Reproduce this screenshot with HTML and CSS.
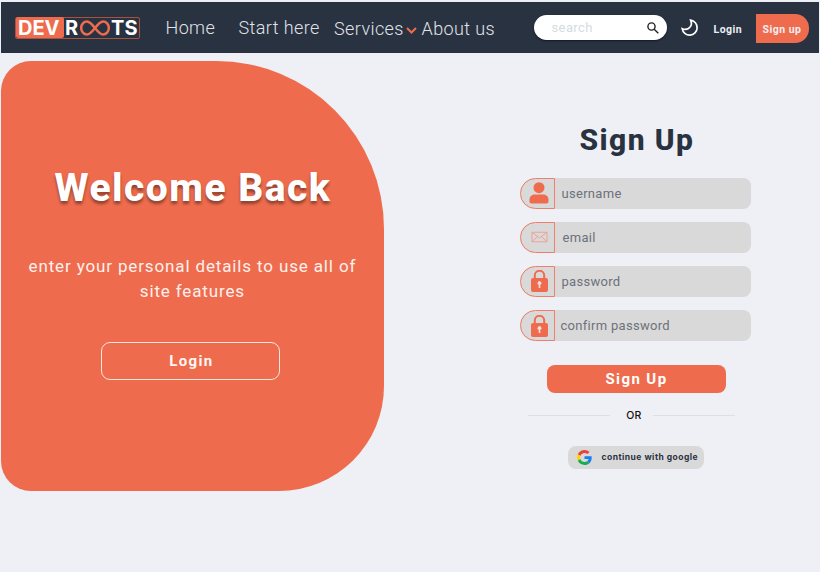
FILE: index.html
```html
<!DOCTYPE html>
<html lang="en">
<head>
<meta charset="utf-8">
<title>DevRoots - Sign Up</title>
<link rel="stylesheet" href="styles.css">
</head>
<body>
<header class="navbar">
  <a class="logo"><span class="logo-dev">DEV</span><span class="logo-r">R</span><svg class="logo-loop" viewBox="0 0 30 16"><path d="M15 8C11.500 3.500 9.500 1.500 7 1.500a5.800 6.500 0 0 0 0 13c2.500 0 4.500-2 8-6.500s5.500-6.500 8-6.500a5.800 6.500 0 0 1 0 13c-2.500 0-4.500-2-8-6.500z"/></svg><span class="logo-ts">TS</span></a>
  <nav class="links">
    <a class="link home">Home</a>
    <a class="link start">Start here</a>
    <a class="link services">Services</a>
    <svg class="chevron" viewBox="0 0 11 7"><path d="M1 1l4.500 4.500L10 1"/></svg>
    <a class="link about">About us</a>
  </nav>
  <div class="search"><span class="search-text">search</span><svg class="search-icon" viewBox="0 0 12 12"><circle cx="4.500" cy="4.500" r="3.600"/><path d="M7.200 7.200L11.300 11.300"/></svg></div>
  <svg class="moon" viewBox="0 0 18 18"><path d="M9.600 1.200A7.500 7.500 0 1 1 1.200 9.700Q4.500 11.200 7.400 9.500Q12 6.800 9.600 1.200z"/></svg>
  <a class="nav-login">Login</a>
  <a class="nav-signup">Sign up</a>
</header>
<main class="content">
  <section class="welcome">
    <h1 class="welcome-title">Welcome Back</h1>
    <p class="welcome-copy">enter your personal details to use all of<br>site features</p>
    <button class="welcome-login">Login</button>
  </section>
  <form class="signup">
    <h2 class="signup-title">Sign Up</h2>
    <div class="field"><span class="field-icon"><svg class="user" viewBox="0 0 20 22"><circle cx="10" cy="5.700" r="5.500"/><path d="M.5 19.500v-2c0-3 2.500-5 5.500-5h8c3 0 5.500 2 5.500 5v2c0 1.300-.8 2-2 2h-15c-1.200 0-2-.7-2-2z"/></svg></span><span class="field-label username">username</span></div>
    <div class="field"><span class="field-icon"><svg class="mail" viewBox="0 0 18 12"><path d="M1 1h16v10H1zM1 1l8 6 8-6M1 11l6-5.500M17 11l-6-5.500"/></svg></span><span class="field-label email">email</span></div>
    <div class="field"><span class="field-icon"><svg class="lock" viewBox="0 0 17 22"><path class="shackle" d="M3.800 9V5.500a4.700 4.700 0 0 1 9.400 0V9"/><rect y="8" width="17" height="14" rx="2"/><path class="keyhole" d="M7.700 14.800a1.900 1.900 0 1 1 1.600 0V18H7.700z"/></svg></span><span class="field-label password">password</span></div>
    <div class="field"><span class="field-icon"><svg class="lock" viewBox="0 0 17 22"><path class="shackle" d="M3.800 9V5.500a4.700 4.700 0 0 1 9.400 0V9"/><rect y="8" width="17" height="14" rx="2"/><path class="keyhole" d="M7.700 14.800a1.900 1.900 0 1 1 1.600 0V18H7.700z"/></svg></span><span class="field-label confirm">confirm password</span></div>
    <button class="submit" type="button">Sign Up</button>
    <div class="divider"><span class="or">OR</span></div>
    <button class="google" type="button"><svg class="google-icon" viewBox="0 0 48 48"><path fill="#EA4335" d="M24 9.500c3.540 0 6.710 1.220 9.210 3.600l6.850-6.850C35.900 2.380 30.470 0 24 0 14.620 0 6.510 5.380 2.560 13.220l7.980 6.190C12.430 13.720 17.740 9.500 24 9.500z"/><path fill="#1a7df0" d="M46.980 24.550c0-1.570-.15-3.090-.38-4.550H24v9.020h12.940c-.58 2.960-2.260 5.480-4.780 7.180l7.730 6c4.510-4.180 7.090-10.360 7.090-17.650z"/><path fill="#FFD500" d="M10.530 28.590c-.48-1.450-.76-2.990-.76-4.590s.27-3.140.76-4.590l-7.980-6.190C.92 16.460 0 20.120 0 24s.92 7.540 2.560 10.780l7.970-6.190z"/><path fill="#16b04a" d="M24 48c6.480 0 11.930-2.130 15.890-5.810l-7.730-6c-2.150 1.450-4.920 2.300-8.160 2.300-6.260 0-11.570-4.220-13.470-9.910l-7.980 6.190C6.510 42.620 14.620 48 24 48z"/></svg><span class="google-text">continue with google</span></button>
  </form>
</main>
</body>
</html>
```
FILE: styles.css
```css
* { box-sizing: border-box; }

body {
  margin: 0;
  padding: 2.4px 1.500px 0 .8px;
  height: 572px;
  overflow: hidden;
  background: #eff0f5;
  font-family: Roboto, "Liberation Sans", sans-serif;
  white-space: nowrap;
}

svg { display: block; flex: none; fill: none; }
button { border: 0; padding: 0; font-family: inherit; }

.navbar {
  display: flex;
  align-items: center;
  height: 51px;
  padding-left: 14.200px;
  background: #293241;
}

.logo {
  display: flex;
  align-items: center;
  width: 125.500px;
  height: 22px;
  border: 1px solid #a9523f;
  border-radius: 2px;
  color: #fff;
  font: 700 20px/23px Inter, sans-serif;
}
.logo-dev { width: 48px; height: 21px; padding-left: 2px; border-radius: 2px; background: #ee6c4d; }
.logo-r { width: 16px; padding: 2px 0 0 1px; }
.logo-loop { width: 30px; height: 16px; stroke: #ee6c4d; stroke-width: 2.500; }
.logo-ts { padding: 2px 0 0 1px; letter-spacing: .2px; }

.links { display: flex; align-items: center; width: 394px; padding-left: 25px; }
.link { color: #e0e3e8; font-size: 18px; font-weight: 300; line-height: 24px; letter-spacing: .4px; }
.home { width: 73px; padding-top: 1px; }
.start { width: 95.500px; padding-top: 1px; }
.services { width: 72px; padding-top: 2px; }
.chevron { width: 11px; height: 7px; margin-top: 6px; stroke: #ee6c4d; stroke-width: 2; }
.about { padding: 2px 0 0 4.500px; }

.search {
  display: flex;
  align-items: center;
  justify-content: space-between;
  width: 133px;
  height: 25px;
  padding: 0 8px 0 17px;
  border-radius: 13px;
  background: #fff;
  box-shadow: 0 1px 2px rgba(0, 0, 0, .5);
}
.search-text { color: #d3dddf; font-size: 13px; letter-spacing: .4px; }
.search-icon { width: 12px; height: 12px; stroke: #222; stroke-width: 1.400; }
.moon { width: 18px; height: 18px; margin-left: 14px; stroke: #fff; stroke-width: 1.700; }
.nav-login { width: 43px; margin-left: 14px; padding-top: 3px; color: #eceef2; font-size: 10.500px; font-weight: 700; letter-spacing: .5px; }
.nav-signup {
  width: 53px;
  height: 29px;
  margin-top: 2px;
  padding-left: 6px;
  border-radius: 0 14px 14px 0;
  background: #ee6c4d;
  color: #f4eef0;
  font-size: 10.500px;
  font-weight: 700;
  line-height: 31px;
  letter-spacing: .5px;
}

.content { display: flex; padding-top: 7.200px; }

.welcome {
  display: flex;
  flex-direction: column;
  align-items: center;
  width: 383.200px;
  height: 430px;
  padding-top: 103px;
  border-radius: 30px 168px 105px 30px;
  background: #ee6c4d;
  color: #fff;
}
.welcome-title { margin: 0; padding-left: 1px; font-size: 39px; font-weight: 800; line-height: 48px; letter-spacing: 1.450px; text-shadow: 0 3px 3px rgba(0, 0, 0, .4); }
.welcome-copy { margin: 42px 0 0; color: #fff0ec; font-size: 17px; line-height: 25.500px; letter-spacing: .86px; text-align: center; }
.welcome-login {
  width: 179px;
  height: 38px;
  margin: 37px 3px 0 0;
  padding-left: 1px;
  border: 1.500px solid #fde5df;
  border-radius: 9px;
  background: none;
  color: #fff5f2;
  font-size: 15px;
  font-weight: 700;
  letter-spacing: 1.400px;
}

.signup { display: flex; flex-direction: column; align-items: center; width: 231px; margin-left: 136.500px; padding-top: 60px; }
.signup-title { margin: 0 0 19px; padding-left: 2px; color: #293241; font-size: 30px; font-weight: 800; line-height: 38px; letter-spacing: 1.400px; }
.field { display: flex; align-items: center; width: 231px; height: 31px; margin-bottom: 13.200px; border-radius: 16px 8px 8px 16px; background: #d9d9d9; }
.field-icon { display: flex; align-items: center; justify-content: center; width: 35px; height: 31px; padding-left: 3px; border: 1px solid #ee806a; border-radius: 16px 0 0 16px; }
.user { width: 20px; height: 22px; fill: #ee6c4d; }
.mail { width: 17px; height: 12px; stroke: #eea092; stroke-width: 1; }
.lock { width: 17px; height: 22px; fill: #ee6c4d; }
.shackle { fill: none; stroke: #ee6c4d; stroke-width: 2; }
.keyhole { fill: #eee0df; }
.field-label { color: #6d717b; font-size: 13px; letter-spacing: .3px; }
.username, .password { padding-left: 6px; }
.email { padding-left: 7px; }
.confirm { padding-left: 5px; }
.submit { width: 179px; height: 28px; margin: 11px 0 0 1px; border-radius: 8px; background: #ee6c4d; color: #fff; font-size: 15px; font-weight: 700; letter-spacing: 1.400px; }
.divider { display: flex; align-items: center; width: 207px; height: 16px; margin: 14px 8px 0 0; }
.divider::before, .divider::after { content: ""; flex: 1; height: 1.500px; background: #dedfe1; }
.or { width: 43px; padding-left: 4px; text-align: center; color: #111; font: 500 10.500px Inter, sans-serif; letter-spacing: .3px; }
.google { display: flex; align-items: center; width: 136px; height: 23px; margin: 23px 0 0 1px; padding-left: 9px; border-radius: 8px; background: #d9d9d9; }
.google-icon { width: 15px; height: 15px; }
.google-text { margin: -2px 0 0 9px; color: #293241; font: 700 8.500px Inter, sans-serif; letter-spacing: .48px; }
```
